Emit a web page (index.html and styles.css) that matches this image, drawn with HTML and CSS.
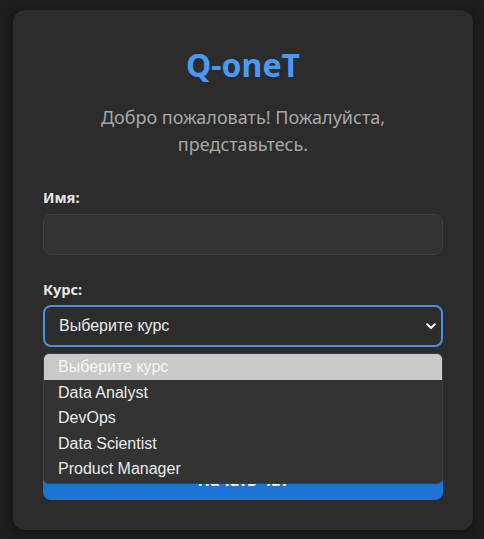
FILE: index.html
```html
<!DOCTYPE html>
<html lang="ru">
<head>
<meta charset="utf-8">
<title>Q-oneT</title>
<link rel="stylesheet" href="styles.css">
</head>
<body>
<div class="card">
  <h1 class="title">Q-oneT</h1>
  <p class="subtitle">Добро пожаловать! Пожалуйста,<br>представьтесь.</p>
  <div class="group">
    <label class="label">Имя:</label>
    <div class="input"></div>
  </div>
  <div class="group group-course">
    <label class="label label-course">Курс:</label>
    <div class="select-wrap">
      <div class="select">
        <span>Выберите курс</span>
        <svg class="chev" width="10" height="7" viewBox="0 0 10 7"><polyline points="1.2,1.2 5,5 8.8,1.2" fill="none" stroke="#f0f0f0" stroke-width="2" stroke-linecap="round" stroke-linejoin="round"/></svg>
      </div>
      <ul class="dropdown">
        <li class="opt active">Выберите курс</li>
        <li class="opt">Data Analyst</li>
        <li class="opt">DevOps</li>
        <li class="opt">Data Scientist</li>
        <li class="opt">Product Manager</li>
      </ul>
    </div>
  </div>
  <button class="btn">Начать чат</button>
</div>
</body>
</html>
```
FILE: styles.css
```css
html, body {
  margin: 0;
  padding: 0;
}
body {
  background: #1e1e1e;
  width: 484px;
  height: 539px;
  font-family: "Noto Sans", "Open Sans", sans-serif;
  padding: 10px 0 0 13px;
  box-sizing: border-box;
  overflow: hidden;
}
.card {
  width: 460px;
  height: 520px;
  box-sizing: border-box;
  background: #2c2c2c;
  border-radius: 12px;
  box-shadow: 0 2px 10px rgba(0,0,0,0.45);
  padding: 30px 30px 30px;
  display: flex;
  flex-direction: column;
}
.title {
  margin: 0;
  height: 50px;
  line-height: 50px;
  text-align: center;
  color: #4a9af5;
  font-size: 32px;
  font-weight: 700;
}
.subtitle {
  margin: 14px 0 0;
  text-align: center;
  color: #a8a8a8;
  font-size: 18px;
  line-height: 27px;
}
.group {
  display: flex;
  flex-direction: column;
  margin-top: 30px;
}
.group-course {
  margin-top: 25px;
}
.label {
  color: #e6e6e6;
  font-weight: 700;
  font-size: 14.5px;
  line-height: 18px;
  margin-bottom: 8px;
}
.label-course {
  margin-bottom: 7px;
}
.input {
  height: 41px;
  box-sizing: border-box;
  background: #333333;
  border: 1px solid #3e3e3e;
  border-radius: 8px;
}
.select-wrap {
  position: relative;
}
.select {
  height: 42px;
  box-sizing: border-box;
  border: 2px solid #4a8fe6;
  border-radius: 8px;
  background: #2d2d2d;
  display: flex;
  align-items: center;
  justify-content: space-between;
  padding: 0 5px 0 14px;
  font-family: "Liberation Sans", Arial, sans-serif;
  font-size: 16px;
  color: #ececec;
}
.chev {
  display: block;
}
.dropdown {
  position: absolute;
  left: 0;
  right: 0;
  top: 48px;
  margin: 0;
  padding: 0 0 1px;
  list-style: none;
  background: #333333;
  border: 1px solid #3e3e3e;
  border-radius: 6px;
  overflow: hidden;
  z-index: 2;
  font-family: "Liberation Sans", Arial, sans-serif;
  font-size: 16px;
  color: #ececec;
}
.opt {
  height: 25.5px;
  line-height: 25.5px;
  padding-left: 14px;
}
.opt.active {
  background: #c9c9c9;
  color: #f6f6f6;
}
.btn {
  margin-top: auto;
  height: 42px;
  border: none;
  border-radius: 8px;
  background: #1c74d4;
  color: #ffffff;
  font-family: "Noto Sans", sans-serif;
  font-weight: 700;
  font-size: 16px;
  padding: 2px 0 0;
}
```
